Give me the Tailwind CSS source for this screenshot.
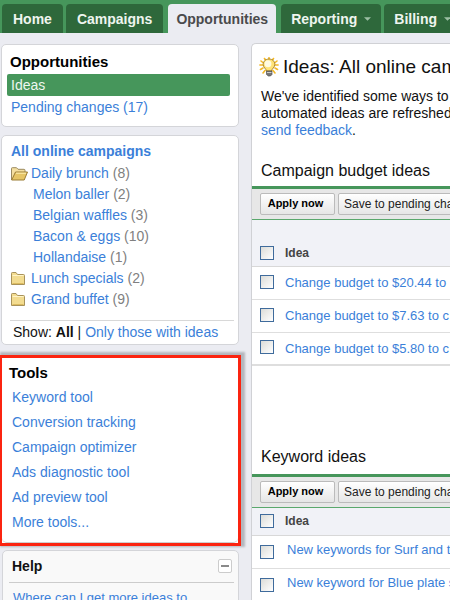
<!DOCTYPE html>
<html lang="en">
<head>
<meta charset="utf-8">
<title>Opportunities</title>
<script src="https://cdn.jsdelivr.net/npm/@tailwindcss/browser@4"></script>
</head>
<body class="h-screen overflow-hidden bg-[#ebecf2] font-['Liberation_Sans',Arial,sans-serif] text-sm text-[#111]">
<nav class="flex h-[33px] gap-[3px] overflow-hidden bg-[#46965b] pt-1 pl-0.5 font-bold whitespace-nowrap text-[#eef5ef]">
  <a href="#" class="flex shrink-0 items-center rounded-t bg-[#2e683b] px-[11px]">Home</a>
  <a href="#" class="flex shrink-0 items-center rounded-t bg-[#2e683b] px-[11px]">Campaigns</a>
  <a href="#" class="mx-0.5 flex shrink-0 items-center rounded-t bg-[#ebecf2] px-2 text-[#4a4a4c]">Opportunities</a>
  <a href="#" class="flex shrink-0 items-center gap-[7px] rounded-t bg-[#2e683b] px-2.5">Reporting
    <svg class="h-1 w-[7px]" viewBox="0 0 8 4" fill="#9dbfa4" aria-hidden="true"><path d="M0 0h8L4 4z"/></svg></a>
  <a href="#" class="flex shrink-0 items-center gap-[7px] rounded-t bg-[#2e683b] px-2.5">Billing
    <svg class="h-1 w-[7px]" viewBox="0 0 8 4" fill="#9dbfa4" aria-hidden="true"><path d="M0 0h8L4 4z"/></svg></a>
</nav>
<div class="flex">
  <aside class="w-[251px] shrink-0 pt-[11px] whitespace-nowrap">
    <section class="ml-px mr-3 rounded-[5px] border border-[#d4d5d9] bg-white pt-[5px] pb-2">
      <h2 class="pl-2 text-[15px] leading-6 font-bold text-black">Opportunities</h2>
      <a href="#" class="mr-2 ml-[5px] block rounded-xs bg-[#46965b] pl-1 leading-[22px] text-[#eef7f0]">Ideas</a>
      <a href="#" class="block pl-[9px] leading-[22px] text-[#3b7fd9]">Pending changes (17)</a>
    </section>
    <section class="mt-2 ml-px mr-3 rounded-[5px] border border-[#d4d5d9] bg-white pt-[3px] pb-px">
      <h2 class="pl-[9px] leading-6 font-bold"><a href="#" class="text-[#3b7fd9]">All online campaigns</a></h2>
      <ul class="leading-[21px] text-[#808080]">
        <li class="flex items-center gap-[3px] pl-[9px]">
          <svg class="h-[14px] w-[17px]" viewBox="0 0 17 14" aria-hidden="true"><path d="M.5 13V1.5Q.5.7 1.3.7H5.500l1.500 1.600h6q1 0 1 1V5" fill="#f4dfa0" stroke="#9b8a60"/><path d="M.7 13 4.500 5h12l-3.300 8z" fill="#e6c566" stroke="#9a7c35"/><path d="M5 6.200h10" stroke="#fff1b5"/></svg>
          <span><a href="#" class="text-[#3b7fd9]">Daily brunch</a> (8)</span></li>
        <li class="pl-[31px]"><a href="#" class="text-[#3b7fd9]">Melon baller</a> (2)</li>
        <li class="pl-[31px]"><a href="#" class="text-[#3b7fd9]">Belgian waffles</a> (3)</li>
        <li class="pl-[31px]"><a href="#" class="text-[#3b7fd9]">Bacon &amp; eggs</a> (10)</li>
        <li class="pl-[31px]"><a href="#" class="text-[#3b7fd9]">Hollandaise</a> (1)</li>
        <li class="flex items-center gap-1.5 pl-[9px]">
          <svg class="h-[13px] w-[14px]" viewBox="0 0 14 13" aria-hidden="true"><path d="M.5 12.500V1.300Q.5.500 1.300.500H5l1.500 2h6q1 0 1 1v9z" fill="#f3dc90" stroke="#a8925a"/><path d="M1.500 11.500h11" stroke="#dcbb60"/><path d="M1.500 3.500h11" stroke="#fff4c8"/></svg>
          <span><a href="#" class="text-[#3b7fd9]">Lunch specials</a> (2)</span></li>
        <li class="flex items-center gap-1.5 pl-[9px]">
          <svg class="h-[13px] w-[14px]" viewBox="0 0 14 13" aria-hidden="true"><path d="M.5 12.500V1.300Q.5.500 1.300.500H5l1.500 2h6q1 0 1 1v9z" fill="#f3dc90" stroke="#a8925a"/><path d="M1.500 11.500h11" stroke="#dcbb60"/><path d="M1.500 3.500h11" stroke="#fff4c8"/></svg>
          <span><a href="#" class="text-[#3b7fd9]">Grand buffet</a> (9)</span></li>
      </ul>
      <p class="mt-2.5 ml-2 mr-1 border-t border-[#d8d8d8] pl-[3px] leading-[22px]">Show: <b>All</b> | <a href="#" class="text-[#3b7fd9]">Only those with ideas</a></p>
    </section>
    <section class="mt-2.5 mr-2.5 border-3 border-l-2 border-[#fb2410] bg-white shadow-[2px_-1px_2px_2px_#b4b7bd]">
      <div class="rounded-b-[5px] border-b border-[#cfcfcf] pt-[2px] pb-[7px]">
        <h2 class="pl-[7px] text-[15px] leading-[25px] font-bold text-black">Tools</h2>
        <ul class="pl-2.5 leading-[25px] text-[#3b7fd9]">
          <li><a href="#">Keyword tool</a></li>
          <li><a href="#">Conversion tracking</a></li>
          <li><a href="#">Campaign optimizer</a></li>
          <li><a href="#">Ads diagnostic tool</a></li>
          <li><a href="#">Ad preview tool</a></li>
          <li><a href="#">More tools...</a></li>
        </ul>
      </div>
    </section>
    <section class="mt-1 ml-0.5 mr-3 rounded-[5px] border border-[#d4d5d9] bg-[#f9f9f9] pt-[3px]">
      <div class="mr-1 ml-1.5 flex items-center justify-between border-b border-[#ccc] pr-0.5 pb-1 pl-[3px]">
        <h2 class="leading-6 font-bold">Help</h2>
        <button type="button" aria-labelledby="collapse" class="flex h-[14px] w-[14px] items-center justify-center rounded-xs border border-[#ccc] bg-white"><span id="collapse" class="h-0.5 w-2 bg-[#8a8a8a]"></span></button>
      </div>
      <a href="#" class="block pt-1.5 pl-2.5 text-[13px] leading-[18px] text-[#3b7fd9]">Where can I get more ideas to</a>
    </section>
  </aside>
  <main class="mt-2.5 min-w-0 flex-1 overflow-hidden rounded-tl-[5px] border-t border-l border-[#d0d1d5] bg-white pt-[11px] whitespace-nowrap">
    <div class="flex items-center gap-1 pl-[7px]">
      <svg class="h-5 w-5 shrink-0" viewBox="0 0 20 20" aria-hidden="true">
        <g stroke="#f3b826" stroke-width="1.600" stroke-linecap="round"><path d="M10 .7V3M5.500 1.500 7 4M14.500 1.500 13 4M2 4l2.500 2M18 4l-2.500 2M.9 8H4M19.100 8H16M1.500 12.500 4 11M18.500 12.500 16 11M4 16l2-2.500M16 16l-2-2.500"/></g>
        <path d="M10 2C6.300 2 4 4.800 4.200 7.800c.2 2.800 2.800 3.800 3.300 6.200h5c.4-2.300 3.200-3.500 3.300-6.300C15.900 4.500 13.700 2 10 2z" fill="#ffe377" stroke="#94701c" stroke-width=".8"/>
        <ellipse cx="9" cy="6.800" rx="3.400" ry="3.500" fill="#fffbe2"/>
        <path d="M7.500 14h5.500v3.500L11.500 19H9.300l-1.800-1.500z" fill="#777" stroke="#444" stroke-width=".6"/><path d="M8 15.500h4.500" stroke="#ccc"/>
      </svg>
      <h1 class="text-[19px] leading-6">Ideas: All online campaigns</h1>
    </div>
    <p class="mt-[9px] pl-[9px] leading-[17px]">We've identified some ways to<br>automated ideas are refreshed<br><a href="#" class="text-[#3b7fd9]">send feedback</a>.</p>
    <section>
      <h2 class="mt-[21px] pl-[9px] text-base leading-[22px]">Campaign budget ideas</h2>
      <div class="mt-1 flex items-center gap-[3px] overflow-hidden border-t-3 border-b border-t-[#46965b] border-b-[#5aa86c] bg-[#e7e7e7] py-1 pl-2">
        <button type="button" class="h-[22px] w-[75px] shrink-0 rounded-xs border border-[#bbb] bg-linear-to-b from-white to-[#e6e6e6] pr-1 text-[11px] font-bold text-black">Apply now</button>
        <button type="button" class="h-[22px] shrink-0 rounded-xs border border-[#bbb] bg-linear-to-b from-white to-[#e6e6e6] px-[5px] text-xs text-[#222]">Save to pending changes</button>
      </div>
      <table class="w-full table-fixed border-collapse text-[13px] text-[#3b7fd9]">
        <thead><tr class="h-[46px] border-b border-[#d8d8d8] bg-[#f1f2f7]">
          <th class="w-[33px] pb-1.5 pl-2 text-left align-bottom"><input type="checkbox" aria-labelledby="b0" class="block h-[14px] w-[14px] appearance-none border border-[#3f6b9c] bg-linear-to-br from-[#dcdcd8] to-white"></th>
          <th id="b0" class="pb-[5px] text-left align-bottom text-xs font-bold leading-4 text-[#444]">Idea</th></tr></thead>
        <tbody>
          <tr class="h-[33px] border-b border-[#dedede]"><td class="pb-0.5 pl-2"><input type="checkbox" aria-labelledby="b1" class="block h-[14px] w-[14px] appearance-none border border-[#3f6b9c] bg-linear-to-br from-[#dcdcd8] to-white"></td><td class="overflow-hidden pt-0.5"><a id="b1" href="#">Change budget to $20.44 to</a></td></tr>
          <tr class="h-[33px] border-b border-[#dedede]"><td class="pb-0.5 pl-2"><input type="checkbox" aria-labelledby="b2" class="block h-[14px] w-[14px] appearance-none border border-[#3f6b9c] bg-linear-to-br from-[#dcdcd8] to-white"></td><td class="overflow-hidden pt-0.5"><a id="b2" href="#">Change budget to $7.63 to c</a></td></tr>
          <tr class="h-[33px] border-b-2 border-[#dedede]"><td class="pb-0.5 pl-2"><input type="checkbox" aria-labelledby="b3" class="block h-[14px] w-[14px] appearance-none border border-[#3f6b9c] bg-linear-to-br from-[#dcdcd8] to-white"></td><td class="overflow-hidden pt-0.5"><a id="b3" href="#">Change budget to $5.80 to c</a></td></tr>
        </tbody>
      </table>
    </section>
    <section class="pt-20">
      <h2 class="pl-[9px] text-base leading-[22px]">Keyword ideas</h2>
      <div class="mt-1.5 flex items-center gap-[3px] overflow-hidden border-t-3 border-b border-t-[#46965b] border-b-[#5aa86c] bg-[#e7e7e7] py-1 pl-2">
        <button type="button" class="h-[22px] w-[75px] shrink-0 rounded-xs border border-[#bbb] bg-linear-to-b from-white to-[#e6e6e6] pr-1 text-[11px] font-bold text-black">Apply now</button>
        <button type="button" class="h-[22px] shrink-0 rounded-xs border border-[#bbb] bg-linear-to-b from-white to-[#e6e6e6] px-[5px] text-xs text-[#222]">Save to pending changes</button>
      </div>
      <table class="w-full table-fixed border-collapse text-[13px] text-[#3b7fd9]">
        <thead><tr class="h-[27px] border-b border-[#d8d8d8] bg-[#f1f2f7]">
          <th class="w-[33px] pl-2 text-left"><input type="checkbox" aria-labelledby="k0" class="block h-[14px] w-[14px] appearance-none border border-[#3f6b9c] bg-linear-to-br from-[#dcdcd8] to-white"></th>
          <th id="k0" class="text-left text-xs font-bold text-[#444]">Idea</th></tr></thead>
        <tbody>
          <tr class="h-[33px] border-b border-[#dedede]"><td class="pl-2"><input type="checkbox" aria-labelledby="k1" class="block h-[14px] w-[14px] appearance-none border border-[#3f6b9c] bg-linear-to-br from-[#dcdcd8] to-white"></td><td class="overflow-hidden pb-0.5 pl-0.5"><a id="k1" href="#">New keywords for Surf and t</a></td></tr>
          <tr class="h-[33px]"><td class="pl-2"><input type="checkbox" aria-labelledby="k2" class="block h-[14px] w-[14px] appearance-none border border-[#3f6b9c] bg-linear-to-br from-[#dcdcd8] to-white"></td><td class="overflow-hidden pb-0.5 pl-0.5"><a id="k2" href="#">New keyword for Blue plate s</a></td></tr>
        </tbody>
      </table>
    </section>
  </main>
</div>
</body>
</html>
